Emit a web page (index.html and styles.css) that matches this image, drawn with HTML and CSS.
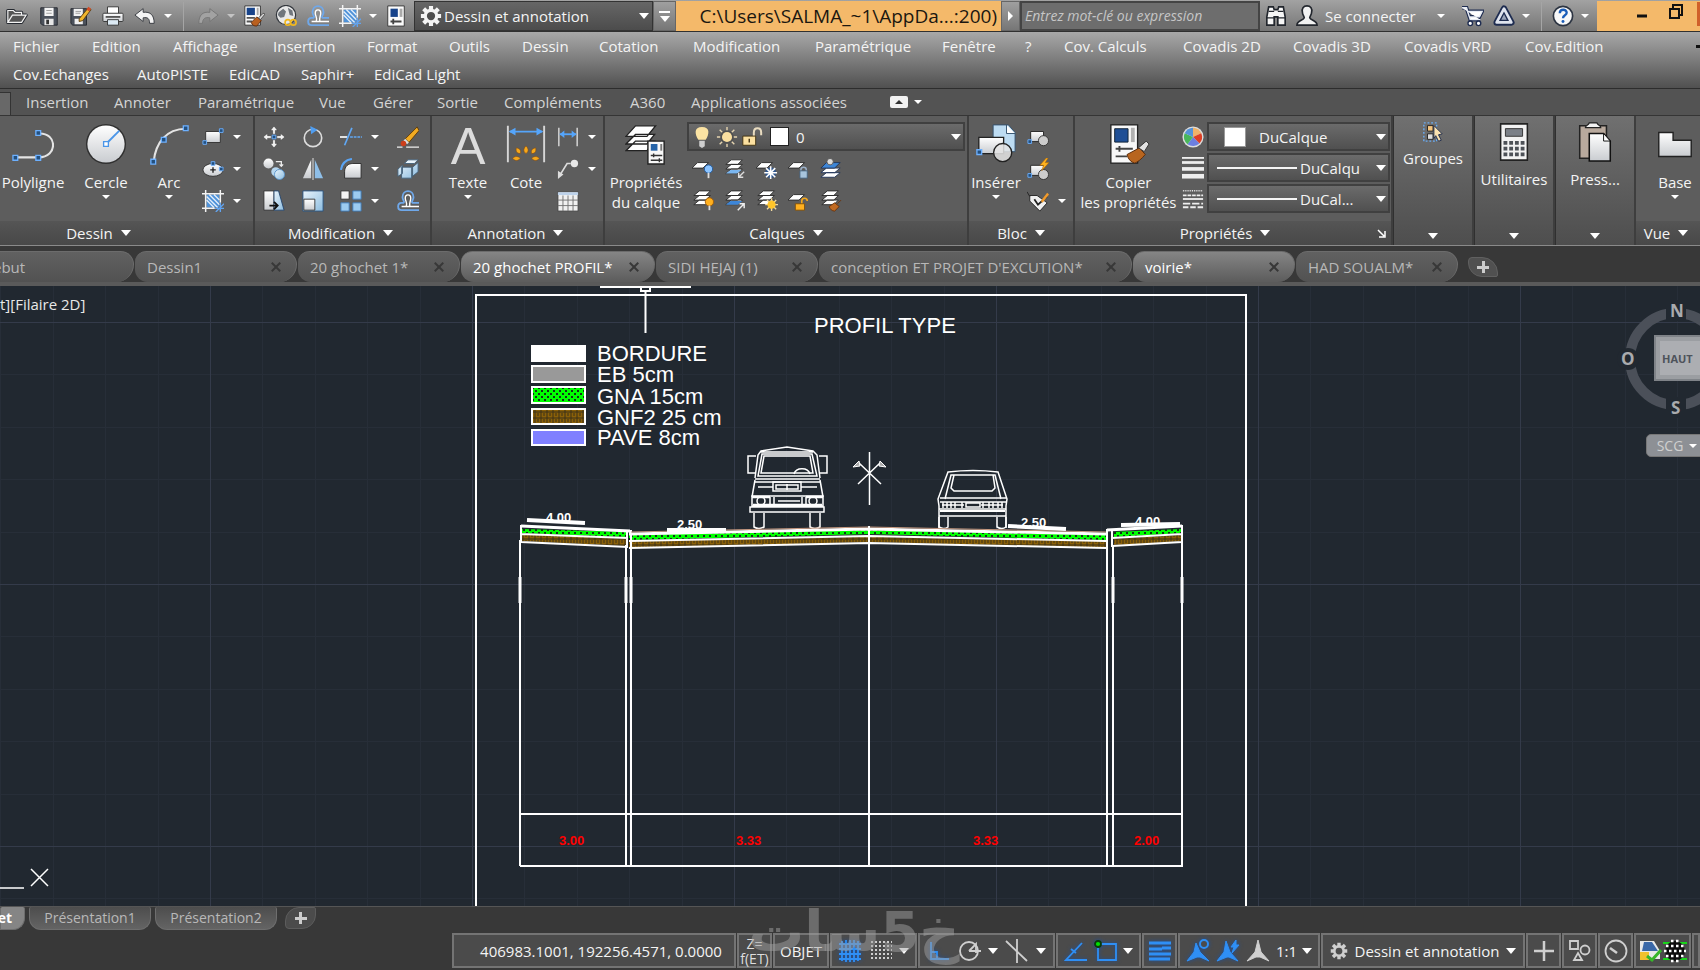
FILE: index.html
```
<!DOCTYPE html>
<html lang="fr">
<head>
    <meta charset="UTF-8">
    <meta name="viewport" content="width=device-width, initial-scale=1.0">
    <title>20 ghochet PROFIL</title>
    <link rel="stylesheet" href="styles.css">
</head>
<body>

    <!-- shared icons -->
    <svg class="defs" aria-hidden="true">
        <defs>
            <linearGradient id="gw" x1="0" y1="0" x2="0" y2="1"><stop offset="0" stop-color="#fff"/><stop offset="1" stop-color="#c9ccd0"/></linearGradient>
            <linearGradient id="gb" x1="0" y1="0" x2="1" y2="1"><stop offset="0" stop-color="#eaf4fb"/><stop offset="1" stop-color="#8dbde0"/></linearGradient>
            <pattern id="hatch-green" width="6" height="6" patternUnits="userSpaceOnUse"><rect width="6" height="6" fill="#00ff00"/><rect width="2" height="2" x="1" y="1" fill="#12301a"/><rect width="2" height="2" x="4" y="4" fill="#12301a"/></pattern>
            <pattern id="hatch-brown" width="6" height="6" patternUnits="userSpaceOnUse"><rect width="6" height="6" fill="#8a6008"/><path d="M1 0v6M4 0v3" stroke="#3a3018"/><path d="M0 5h6" stroke="#3a3018"/></pattern>
            <pattern id="grid" x="210" y="323" width="262" height="262" patternUnits="userSpaceOnUse">
                <path d="M52.5 0v262M105.5 0v262M157.5 0v262M210.5 0v262M0 52.5h262M0 105.5h262M0 157.5h262M0 210.5h262" stroke="#272e38"/>
                <path d="M0.5 0v262M0 0.5h262" stroke="#343b4a"/>
            </pattern>
        </defs>
        <symbol id="open" viewBox="0 0 24 24"><path d="M2 19V6h6l2 2h7v3M2 19l5-8h15l-5 8z" fill="#dcdcdc" stroke="#24282f" stroke-width="3.5" stroke-linejoin="round"/><path d="M2 19V6h6l2 2h7v3M2 19l5-8h15l-5 8z" fill="#555" stroke="#f3f3f3" stroke-width="1.3"/></symbol>
        <symbol id="save" viewBox="0 0 24 24"><path d="M3 3h18v19H5l-2-2z" fill="#4c525c" stroke="#25292f"/><path d="M7 3h10v9H7z" fill="#f4f4f4"/><path d="M9 6h6M9 9h6" stroke="#999"/><path d="M7 15h10v7H7z" fill="#e6e6e6"/><path d="M9 16h3v5H9z" fill="#333"/></symbol>
        <symbol id="saveas" viewBox="0 0 24 24"><path d="M1 4h17v18H3l-2-2z" fill="#4c525c" stroke="#25292f"/><path d="M4 4h10v8H4zM5 15h9v6H5z" fill="#f0f0f0"/><path d="M6 7h6M6 9h5" stroke="#999"/><path d="M10 15L20 3l3 2-9 12-4 1z" fill="#f1b62d" stroke="#5b3b10"/><path d="M18 5l2-3 3 2-2 3z" fill="#d54b28"/></symbol>
        <symbol id="print" viewBox="0 0 24 24"><path d="M6 2h12v8H6z" fill="#fff" stroke="#333"/><rect x="1" y="9" width="22" height="9" rx="1" fill="url(#gw)" stroke="#333"/><path d="M4 13h16" stroke="#555" stroke-width="2"/><path d="M6 16h12v6H6z" fill="#dceaf4" stroke="#333"/></symbol>
        <symbol id="undo" viewBox="0 0 24 24"><path d="M1 11l9-7v4c8-1 12 3 12 12h-5c0-5-2-7-7-6v4z" fill="#f4f4f4" stroke="#33373d" stroke-linejoin="round"/></symbol>
        <symbol id="redo" viewBox="0 0 24 24"><path d="M23 11l-9-7v4C6 7 2 11 2 20h4c0-5 3-7 8-6v4z" fill="#a2a2a2" stroke="#747474" stroke-linejoin="round"/></symbol>
        <symbol id="laybrush" viewBox="0 0 24 24"><path d="M2 1h17v21H2z" fill="#fbfbfb" stroke="#333"/><path d="M4 3h9v8H4z" fill="#17438a"/><path d="M15 3h2v8h-2z" fill="#aaa"/><path d="M4 14h9M4 18h6" stroke="#555" stroke-width="2"/><path d="M9 19l6-6 5 4-5 6c-3 0-5-1-6-4z" fill="#b9601f" stroke="#5d2a0b"/><path d="M17 14l5-5 2 1-5 6z" fill="#ddd" stroke="#444"/></symbol>
        <symbol id="globe" viewBox="0 0 24 24"><circle cx="12" cy="11" r="10.500" fill="#e8e8e8" stroke="#33373d" stroke-width="1.300"/><path d="M4 8l5-4 3 3-2 6-4 1-3-3zM14 3l5 3 1 6-4-1z" fill="#70767d"/><circle cx="14" cy="19" r="3" fill="none" stroke="#f2b81e" stroke-width="1.800"/><circle cx="20" cy="19" r="3" fill="none" stroke="#f2b81e" stroke-width="1.800"/></symbol>
        <symbol id="offset" viewBox="0 0 24 24"><path d="M24 22H5c-5 0-5-8 0-8h2c2-1-1-3-1-6C6-1 18-1 18 8c0 3-3 5-1 6h7" fill="none" stroke="#6fa8ea" stroke-width="2"/><path d="M24 18H5h5c2-3-1-6-1-9 0-5 6-5 6 0 0 3-2 5-1 9" fill="none" stroke="#fff" stroke-width="1.500"/></symbol>
        <symbol id="crop" viewBox="0 0 24 24"><path d="M5 5h14v14H5z" fill="#4f92d8"/><path d="M5 11l8 8M5 7l12 12M8 5l11 11M13 5l6 6" stroke="#e2eefb" stroke-width="1.500"/><path d="M0 4h24M0 20h14M4 0v24M20 0v14" stroke="#f3f3f3" stroke-width="1.600"/><path d="M14 20h10M20 14v10M15 24l9-9" stroke="#62a3ee" stroke-width="1.500"/></symbol>
        <symbol id="layout" viewBox="0 0 24 24"><path d="M3 1h18v22H3z" fill="#fbfbfb" stroke="#333"/><path d="M6 4h8v9H6z" fill="#17438a"/><path d="M16 4h3v9h-3z" fill="#aaa"/><path d="M6 18h12M9 15v6" stroke="#444" stroke-width="2"/></symbol>
        <symbol id="gear" viewBox="0 0 24 24"><path d="M12 1v22M1 12h22M4 4l16 16M20 4L4 20" stroke="currentColor" stroke-width="4.5"/><circle cx="12" cy="12" r="8" fill="currentColor"/><circle cx="12" cy="12" r="4.5" fill="#4d4d4d"/></symbol>
        <symbol id="bino" viewBox="0 0 24 24"><path d="M4 2h5l1 3h4l1-3h5l2 11v9h-8v-9h-4v9H2v-9z" fill="#f6f6f6" stroke="#22262d" stroke-width="1.8"/><path d="M2 14h8M14 14h8M4 7h6M14 7h6" stroke="#22262d" stroke-width="1.5"/></symbol>
        <symbol id="person" viewBox="0 0 24 24"><path d="M12 1c4 0 6 3 5 7 0 3-2 4-2 6 1 3 8 3 8 8H1c0-5 7-5 8-8 0-2-2-3-2-6-1-4 1-7 5-7z" fill="#f2f2f2" stroke="#22262d" stroke-width="1.8"/></symbol>
        <symbol id="cart" viewBox="0 0 24 24"><path d="M0 3h5l4 13h11M6 7h16l-3 6H8z" fill="#fff" stroke="#1e2c50" stroke-width="4"/><path d="M0 3h5l4 13h11M6 7h16l-3 6H8z" fill="#fff" stroke="#e8ecf4" stroke-width="1.500"/><circle cx="9" cy="20" r="2.500" fill="#fff" stroke="#1e2c50" stroke-width="1.500"/><circle cx="18" cy="20" r="2.500" fill="#fff" stroke="#1e2c50" stroke-width="1.500"/></symbol>
        <symbol id="a360" viewBox="0 0 24 24"><path d="M12 4l8 15H4z" fill="none" stroke="#1e2c50" stroke-width="7" stroke-linejoin="round"/><path d="M12 4l8 15H4z" fill="#1e2c50" stroke="#dfe4ee" stroke-width="3" stroke-linejoin="round"/><path d="M12 10l3 6H9z" fill="#9aa4b8"/></symbol>
        <symbol id="help" viewBox="0 0 24 24"><circle cx="12" cy="12" r="10.5" fill="#f8f8f8" stroke="#2c3442" stroke-width="1.8"/><path d="M8.500 9c0-5 7.500-5 7.500-.5 0 3-4 2.500-4 6" fill="none" stroke="#1b5db8" stroke-width="2.6"/><circle cx="12" cy="18" r="1.600" fill="#1b5db8"/></symbol>

        <symbol id="polyline" viewBox="0 0 44 40"><path d="M4 34h24M28 9c20-1 20 25 0 25" fill="none" stroke="#e4e4e4" stroke-width="2.2"/><path d="M1 32h5v5H1zM25 32h5v5h-5zM25 6h5v5h-5z" fill="#24507e" stroke="#6cb0ff" stroke-width="1.4"/></symbol>
        <symbol id="circle" viewBox="0 0 44 44"><circle cx="22" cy="22" r="21" fill="#303030"/><circle cx="22" cy="22" r="19.500" fill="url(#gw)"/><path d="M22 22L36 8" stroke="#4b96e8" stroke-width="2"/><path d="M19.500 19.500h5v5h-5z" fill="#fff" stroke="#4b96e8" stroke-width="1.4"/></symbol>
        <symbol id="arc" viewBox="0 0 44 44"><path d="M6 40C8 22 18 6 40 6" fill="none" stroke="#e4e4e4" stroke-width="2.2"/><path d="M3 38h5v5H3zM14 15h5v5h-5zM37 3h5v5h-5z" fill="#24507e" stroke="#6cb0ff" stroke-width="1.4"/></symbol>
        <symbol id="rect" viewBox="0 0 24 24"><path d="M4 6h16v12H4z" fill="url(#gw)" stroke="#303030"/><path d="M1 16h4v4H1zM19 3h4v4h-4z" fill="#24507e" stroke="#6cb0ff"/></symbol>
        <symbol id="ellipse" viewBox="0 0 24 24"><ellipse cx="12" cy="13" rx="11" ry="7" fill="url(#gw)" stroke="#303030"/><path d="M9 13h6M12 10v6" stroke="#222" stroke-width="1.5"/><path d="M10 4h4v4h-4zM19 10h4v4h-4z" fill="#24507e" stroke="#6cb0ff"/></symbol>
        <symbol id="move" viewBox="0 0 24 24"><path d="M12 0l4 5h-2.500v4h-3V5H8zM12 24l4-5h-2.500v-4h-3v4H8zM0 12l5-4v2.500h4v3H5V16zM24 12l-5-4v2.500h-4v3h4V16z" fill="#f1f1f1" stroke="#333" stroke-width=".6"/><path d="M10 10h4v4h-4z" fill="#24507e" stroke="#6cb0ff"/></symbol>
        <symbol id="rotate" viewBox="0 0 24 24"><circle cx="12" cy="13" r="9.500" fill="none" stroke="#ddd" stroke-width="1.800"/><path d="M9 0l8 4-7 5z" fill="#4f9df0"/></symbol>
        <symbol id="trim" viewBox="0 0 24 24"><path d="M0 12h8" stroke="#eee" stroke-width="2"/><path d="M11 12h13" stroke="#60a8f5" stroke-width="1.600" stroke-dasharray="3 1"/><path d="M5 21l8-19" stroke="#60a8f5" stroke-width="1.800"/></symbol>
        <symbol id="erase" viewBox="0 0 24 24"><path d="M0 23h6M10 23h14" stroke="#eee" stroke-width="1.500"/><path d="M9 14L22 1l2 4-11 13z" fill="#f2ab22" stroke="#5d3b0b"/><path d="M9 14l4 4-2 2-4-4z" fill="#ddd"/><circle cx="7" cy="19" r="3" fill="#cc3f1b"/></symbol>
        <symbol id="copy" viewBox="0 0 24 24"><circle cx="6" cy="6" r="5.500" fill="url(#gw)"/><path d="M14 4h6v4m-2-1l2 2 2-2" fill="none" stroke="#eee" stroke-width="1.400"/><circle cx="14" cy="15" r="5" fill="#b6d6ef"/><circle cx="18" cy="18" r="5.500" fill="url(#gb)" stroke="#5a93c8"/></symbol>
        <symbol id="mirror" viewBox="0 0 24 24"><path d="M10 2v20H1z" fill="url(#gw)"/><path d="M14 2v20h9z" fill="#8fbfe8"/><path d="M12 0v24" stroke="#eee"/></symbol>
        <symbol id="fillet" viewBox="0 0 24 24"><path d="M5 22v-7c0-6 4-9 9-9h9v16z" fill="url(#gw)" stroke="#2c2c2c"/><path d="M1 13C2 6 6 2 13 1" fill="none" stroke="#5aa4f4" stroke-width="2.200"/></symbol>
        <symbol id="explode" viewBox="0 0 24 24"><path d="M8 6l4-4h11l-4 4z" fill="#eaf4fb" stroke="#44617a"/><path d="M1 12l5-4v9l-5 3zM5 10h11v12H5zM17 10l6-5v10l-6 5z" fill="url(#gb)" stroke="#44617a"/></symbol>
        <symbol id="stretch" viewBox="0 0 24 24"><path d="M1 1h11v21H1z" fill="url(#gw)" stroke="#333"/><path d="M12 1h5l6 21H12z" fill="url(#gb)" stroke="#26466d"/><path d="M7 17h9m-4-4l4 4-4 4" fill="none" stroke="#111" stroke-width="2"/></symbol>
        <symbol id="scale" viewBox="0 0 24 24"><path d="M1 1h22v22H1z" fill="url(#gb)" stroke="#29517e"/><path d="M2 10h12v12H2z" fill="url(#gw)" stroke="#333"/></symbol>
        <symbol id="array" viewBox="0 0 24 24"><path d="M1 1h9v9H1z" fill="#f2f2f2" stroke="#333"/><path d="M14 1h9v9h-9zM1 14h9v9H1zM14 14h9v9h-9z" fill="#9ccbf0" stroke="#3f7cb8"/></symbol>

        <symbol id="dim" viewBox="0 0 44 44"><path d="M3 3v38M41 3v38" stroke="#d6d6d6" stroke-width="2"/><path d="M5 9h34" stroke="#55a5fb" stroke-width="2"/><path d="M4 9l7-4v8zM40 9l-7-4v8z" fill="#55a5fb"/><g fill="#f5a81c" stroke="#8a4a0a" stroke-width=".6"><path d="M22 24c3 3 3 6 0 8-3-2-3-5 0-8zM12 26c4 1 5 3 4 6-4 0-5-3-4-6zM32 26c-4 1-5 3-4 6 4 0 5-3 4-6zM8 37c3-3 6-2 8 0-2 3-6 3-8 0zM36 37c-3-3-6-2-8 0 2 3 6 3 8 0z"/></g></symbol>
        <symbol id="lindim" viewBox="0 0 24 24"><path d="M2 2v20M22 2v20" stroke="#d6d6d6" stroke-width="1.600"/><path d="M3 9h18" stroke="#55a5fb" stroke-width="2"/><path d="M3 9l5-4v8zM21 9l-5-4v8z" fill="#55a5fb"/></symbol>
        <symbol id="leader" viewBox="0 0 24 24"><circle cx="19" cy="6" r="4" fill="#e8e8e8"/><path d="M15 6h-4L3 19" fill="none" stroke="#ddd" stroke-width="1.800"/><path d="M1 23v-9l6 4z" fill="#ddd"/></symbol>
        <symbol id="table" viewBox="0 0 24 24"><path d="M1 2h22v21H1z" fill="#f0f0f0" stroke="#444"/><path d="M1 4h22" stroke="#bdd2ea" stroke-width="3"/><path d="M1 11h22M1 17h22M6.500 6v17M12 6v17M17.500 6v17" stroke="#707070"/></symbol>

        <symbol id="sheets" viewBox="0 0 24 24"><g fill="#fff" stroke="#2b2b2b"><path d="M2 19l6-5h12l-5 5zM2 14l6-5h12l-5 5zM2 9l6-5h12l-5 5z"/></g></symbol>
        <symbol id="sheet" viewBox="0 0 24 24"><path d="M0 11l6-6h12l-6 6z" fill="#fff" stroke="#2b2b2b"/></symbol>
        <symbol id="layers" viewBox="0 0 44 44"><g fill="#fff" stroke="#222" stroke-width="1.400"><path d="M1 29l10-10h20L23 29zM1 22L11 12h20l-8 10zM1 14L11 3h21l-9 11z"/></g><path d="M24 19h17v24H24z" fill="#f8f8f8" stroke="#222" stroke-width="1.500"/><path d="M27 22h7v7h-7z" fill="#2563a8"/><path d="M37 22h2v7h-2z" fill="#777"/><path d="M27 34h12M27 39h12M30 32v4M36 37v4" stroke="#333" stroke-width="1.500"/></symbol>
        <symbol id="l1" viewBox="0 0 24 24"><use href="#sheet"/><circle cx="18" cy="12" r="4.500" fill="#8cc4ff" stroke="#1f5aa0"/><path d="M18 16v6" stroke="#ddd" stroke-width="2"/></symbol>
        <symbol id="l2" viewBox="0 0 24 24"><use href="#sheets" y="-2"/><path d="M2 17l5-4h12l-5 4z" fill="#7ab6f0"/><path d="M22 15l-6 6m0-5v5h5" fill="none" stroke="#ddd" stroke-width="1.500"/></symbol>
        <symbol id="l3" viewBox="0 0 24 24"><use href="#sheet"/><circle cx="16" cy="16" r="6" fill="#31578d"/><path d="M16 9v14M9 16h14M11 11l10 10M21 11L11 21" stroke="#fff" stroke-width="1.700"/></symbol>
        <symbol id="l4" viewBox="0 0 24 24"><use href="#sheet"/><path d="M14 15v-2c0-4 6-4 6 0v2" fill="none" stroke="#9bb0c7" stroke-width="1.600"/><path d="M13 14h8v8h-8z" fill="#a7c4dd" stroke="#45617c"/></symbol>
        <symbol id="l5" viewBox="0 0 24 24"><g fill="#fff" stroke="#22365a"><path d="M1 21l6-5h15l-6 5zM1 16l6-5h15l-6 5z"/></g><path d="M1 11l6-6h15l-6 6z" fill="#3d86d8" stroke="#22365a"/><circle cx="11" cy="4" r="3.500" fill="#ddd" stroke="#555"/></symbol>
        <symbol id="l6" viewBox="0 0 24 24"><use href="#sheets" y="-3"/><circle cx="19" cy="13" r="4.500" fill="#ffb01f" stroke="#a35d08"/><path d="M19 17v5" stroke="#ddd" stroke-width="2"/></symbol>
        <symbol id="l7" viewBox="0 0 24 24"><use href="#sheets" y="-3"/><path d="M2 16l5-4h13l-5 4z" fill="#3d86d8"/><path d="M15 22l7-7m-5 0h5v5" fill="none" stroke="#eee" stroke-width="1.600"/></symbol>
        <symbol id="l8" viewBox="0 0 24 24"><use href="#sheets" y="-3"/><path d="M17 9v14M10 16h14M12 11l10 10M22 11L12 21" stroke="#f1d9a0" stroke-width="1.500"/><circle cx="17" cy="16" r="4.500" fill="#ffc52b"/></symbol>
        <symbol id="l9" viewBox="0 0 24 24"><use href="#sheet"/><path d="M15 15v-3c0-4 6-4 6 0" fill="none" stroke="#f5a81c" stroke-width="1.800"/><path d="M8 15h10v7H8z" fill="#ffb01f" stroke="#80500b"/></symbol>
        <symbol id="l10" viewBox="0 0 24 24"><use href="#sheets" y="-3"/><path d="M10 18l6-4 5 4-5 5c-3 0-5-2-6-5zM19 15l4-4" fill="#c06a22" stroke="#6a320b"/></symbol>
        <symbol id="bulb" viewBox="0 0 24 24"><path d="M12 1c9 0 8 8 4 14H8C4 9 3 1 12 1z" fill="#fbe3a3"/><path d="M9 16h6v6l-3 2-3-2z" fill="#cfcfcf"/></symbol>
        <symbol id="sun" viewBox="0 0 24 24"><path d="M12 1v22M1 12h22M4 4l16 16M20 4L4 20" stroke="#e6d5b0" stroke-width="1.500"/><circle cx="12" cy="12" r="7.500" fill="#505050"/><circle cx="12" cy="12" r="5.500" fill="#fbe0a0"/></symbol>
        <symbol id="unlock" viewBox="0 0 24 24"><path d="M14 12V7c0-6 8-6 8 0v3" fill="none" stroke="#e9dcc0" stroke-width="2.200"/><path d="M2 11h14v10H2z" fill="#fbe0a0" stroke="#403010"/><path d="M9 14v4" stroke="#403010" stroke-width="1.500"/></symbol>

        <symbol id="insert" viewBox="0 0 44 44"><path d="M19 2h16l7 8v20H19z" fill="#bddcf2" stroke="#34526e"/><path d="M33 2v9h9" fill="#fff" stroke="#34526e"/><path d="M4 15h26v17H4z" fill="url(#gw)" stroke="#222" stroke-width="1.400"/><circle cx="29" cy="31" r="9.500" fill="#e5e5e5" fill-opacity=".85" stroke="#222" stroke-width="1.400"/><path d="M2 28h5v5H2z" fill="#24507e" stroke="#6cb0ff" stroke-width="1.400"/></symbol>
        <symbol id="block" viewBox="0 0 24 24"><path d="M4 6h14v11H4z" fill="url(#gw)" stroke="#222"/><circle cx="18" cy="16" r="5.500" fill="#ccc" stroke="#333"/><path d="M1 15h4v4H1z" fill="#24507e" stroke="#6cb0ff"/></symbol>
        <symbol id="blockedit" viewBox="0 0 24 24"><use href="#block" y="2"/><path d="M21 0l-7 8h4l-2 6 8-9h-4l3-5z" fill="#ffb31f" stroke="#a96208" stroke-width=".6"/></symbol>
        <symbol id="attr" viewBox="0 0 24 24"><path d="M3 6h8l11 8-8 9L3 12z" fill="#f0f0f0" stroke="#222"/><path d="M8 10l4 6 10-9" fill="none" stroke="#222" stroke-width="2"/><path d="M15 12l7-9 2 2-7 9z" fill="#f09a2c"/><path d="M0 2l3 5" stroke="#222"/></symbol>
        <symbol id="match" viewBox="0 0 44 44"><path d="M3 2h28v40H3z" fill="#f8f8f8" stroke="#222" stroke-width="1.400"/><path d="M7 6h14v14H7z" fill="#1f4f96" stroke="#123"/><path d="M24 5h4v15h-4z" fill="#b0b0b0"/><path d="M8 27h18M8 35h12M12 24v6" stroke="#444" stroke-width="2"/><path d="M20 33l13-7 6 7c-4 5-8 8-11 9-4-1-7-4-8-9z" fill="#b8651f" stroke="#5b2c0b"/><path d="M32 26l8-7 3 3-5 8z" fill="#e2e2e2" stroke="#333"/></symbol>
        <symbol id="wheel" viewBox="0 0 24 24"><circle cx="12" cy="12" r="11.500" fill="#ddd"/><path d="M12 12V2a10 10 0 0 1 9 6z" fill="#f0b268"/><path d="M12 12l9-4a10 10 0 0 1-2 11z" fill="#dd3f25"/><path d="M12 12l7 7a10 10 0 0 1-13 1z" fill="#6c7fe0"/><path d="M12 12l-6 8A10 10 0 0 1 3 8z" fill="#49b65b"/><path d="M12 12L3 8a10 10 0 0 1 9-6z" fill="#5593d8"/></symbol>
        <symbol id="weights" viewBox="0 0 24 24"><path d="M0 1h24" stroke="#eee" stroke-width="2"/><path d="M0 6h24" stroke="#eee" stroke-width="3"/><path d="M0 13h24" stroke="#eee" stroke-width="4"/><path d="M0 21h24" stroke="#eee" stroke-width="5"/></symbol>
        <symbol id="types" viewBox="0 0 24 24"><path d="M1 3h22" stroke="#eee" stroke-width="1.500" stroke-dasharray="1 1"/><path d="M1 8h22" stroke="#eee" stroke-width="2" stroke-dasharray="4 1"/><path d="M1 12h22" stroke="#eee" stroke-width="2"/><path d="M1 17h22" stroke="#eee" stroke-width="2" stroke-dasharray="8 2"/><path d="M1 21h22" stroke="#eee" stroke-width="2" stroke-dasharray="6 2"/></symbol>
        <symbol id="group" viewBox="0 0 24 24"><path d="M2 2h14v20H2z" fill="none" stroke="#69acf5" stroke-width="1.500" stroke-dasharray="2 2"/><path d="M6 5h6v6H6z" fill="#f6c680" stroke="#222"/><path d="M6 14h6v6H6z" fill="#ddd" stroke="#222"/><path d="M13 5l9 9-4 1 3 6-3 1-3-6-2 3z" fill="#fbe2b0" stroke="#1d2a4a"/></symbol>
        <symbol id="calc" viewBox="0 0 44 44"><path d="M8 3h28v38H8z" fill="#f2f2f2" stroke="#222" stroke-width="1.600"/><path d="M13 8h18v8H13z" fill="#7b8087" stroke="#333"/><path d="M11 23h22M11 29h22M11 35h22" stroke="#4d5157" stroke-width="4" stroke-dasharray="4 2"/></symbol>
        <symbol id="paste" viewBox="0 0 44 44"><path d="M6 5h28v34H6z" fill="#b8a99d" stroke="#222" stroke-width="1.600"/><path d="M12 7c0-3 3-2 4-5h8c1 3 4 2 4 5z" fill="#f2f2f2" stroke="#222" stroke-width="1.400"/><path d="M16 13h15l7 8v21H16z" fill="url(#gw)" stroke="#111" stroke-width="1.600"/><path d="M31 13v8h7z" fill="#fff" stroke="#111"/></symbol>
        <symbol id="base" viewBox="0 0 44 44"><path d="M5 10h15v8h19v17H5z" fill="url(#gw)" stroke="#222" stroke-width="1.500"/></symbol>
    </svg>

    <header class="titlebar">
        <div class="quick">
            <button class="qb" aria-label="Ouvrir"><svg class="ic"><use href="#open"/></svg></button>
            <button class="qb" aria-label="Enregistrer"><svg class="ic"><use href="#save"/></svg></button>
            <button class="qb" aria-label="Enregistrer sous"><svg class="ic"><use href="#saveas"/></svg></button>
            <button class="qb" aria-label="Imprimer"><svg class="ic"><use href="#print"/></svg></button>
            <button class="qb" aria-label="Annuler"><svg class="ic"><use href="#undo"/></svg></button>
            <button class="cb" aria-label="Liste annuler"><i class="caret small"></i></button>
            <span class="sep"></span>
            <button class="qb" aria-label="Rétablir"><svg class="ic"><use href="#redo"/></svg></button>
            <button class="cb" aria-label="Liste rétablir"><i class="caret small dim"></i></button>
            <button class="qb" aria-label="Copier calque"><svg class="ic"><use href="#laybrush"/></svg></button>
            <button class="qb" aria-label="Géolocalisation"><svg class="ic"><use href="#globe"/></svg></button>
            <button class="qb" aria-label="Décaler"><svg class="ic"><use href="#offset"/></svg></button>
            <button class="qb" aria-label="Hachures"><svg class="ic"><use href="#crop"/></svg></button>
            <button class="cb" aria-label="Liste hachures"><i class="caret small"></i></button>
            <button class="qb" aria-label="Propriétés"><svg class="ic"><use href="#layout"/></svg></button>
        </div>
        <div class="workspace">
            <svg class="ic"><use href="#gear"/></svg>
            <select aria-label="Espace de travail"><option>Dessin et annotation</option></select>
            <i class="caret"></i>
        </div>
        <button class="more" aria-label="Personnaliser"><i class="bar"></i><i class="caret"></i></button>
        <div class="file-title">C:\Users\SALMA_~1\AppDa...:200)</div>
        <button class="play" aria-label="Développer"><i></i></button>
        <input class="search" type="text" aria-label="Recherche" placeholder="Entrez mot-clé ou expression">
        <div class="account">
            <button class="qb" aria-label="Rechercher"><svg class="ic"><use href="#bino"/></svg></button>
            <button class="signin"><svg class="ic"><use href="#person"/></svg><span>Se connecter</span><i class="caret small"></i></button>
            <button class="qb" aria-label="Boutique"><svg class="ic"><use href="#cart"/></svg></button>
            <button class="qb" aria-label="A360"><svg class="ic"><use href="#a360"/></svg></button>
            <button class="cb" aria-label="Liste A360"><i class="caret small"></i></button>
            <span class="sep"></span>
            <button class="qb" aria-label="Aide"><svg class="ic"><use href="#help"/></svg></button>
            <button class="cb" aria-label="Liste aide"><i class="caret small"></i></button>
        </div>
        <div class="window-buttons">
            <button aria-label="Réduire"><svg width="16" height="20"><path d="M3 14h10" stroke="#111" stroke-width="3"/></svg></button>
            <button aria-label="Restaurer"><svg width="16" height="20"><path d="M2 7h9v9H2zM5 6V3h9v10h-3" fill="none" stroke="#111" stroke-width="2"/></svg></button>
            <button class="close" aria-label="Fermer"></button>
        </div>
    </header>

    <nav class="menubar">
        <div class="menu-row">
            <a href="#">Fichier</a><a href="#">Edition</a><a href="#">Affichage</a><a href="#">Insertion</a><a href="#">Format</a><a href="#">Outils</a><a href="#">Dessin</a><a href="#">Cotation</a><a href="#">Modification</a><a href="#">Paramétrique</a><a href="#">Fenêtre</a><a href="#">?</a><a href="#">Cov. Calculs</a><a href="#">Covadis 2D</a><a href="#">Covadis 3D</a><a href="#">Covadis VRD</a><a href="#">Cov.Edition</a>
            <i class="dash"></i>
        </div>
        <div class="menu-row second">
            <a href="#">Cov.Echanges</a><a href="#">AutoPISTE</a><a href="#">EdiCAD</a><a href="#">Saphir+</a><a href="#">EdiCad Light</a>
        </div>
    </nav>

    <nav class="ribbon-tabs">
        <span class="current-tab"></span>
        <a href="#">Insertion</a><a href="#">Annoter</a><a href="#">Paramétrique</a><a href="#">Vue</a><a href="#">Gérer</a><a href="#">Sortie</a><a href="#">Compléments</a><a href="#">A360</a><a href="#">Applications associées</a>
        <button class="minimize" aria-label="Réduire le ruban"><svg width="18" height="12"><rect width="18" height="12" rx="2" fill="#f2f2f2"/><path d="M5 8l4-4 4 4z" fill="#333"/></svg><i class="caret small"></i></button>
    </nav>

    <section class="ribbon">
        <div class="panel dessin">
            <div class="body">
                <button class="big"><svg><use href="#polyline"/></svg><span>Polyligne</span></button>
                <button class="big"><svg><use href="#circle"/></svg><span>Cercle</span><i class="caret small"></i></button>
                <button class="big"><svg><use href="#arc"/></svg><span>Arc</span><i class="caret small"></i></button>
                <div class="tools">
                    <button class="tool wide" aria-label="Rectangle"><svg class="ic"><use href="#rect"/></svg><i class="caret small"></i></button>
                    <button class="tool wide" aria-label="Ellipse"><svg class="ic"><use href="#ellipse"/></svg><i class="caret small"></i></button>
                    <button class="tool wide" aria-label="Hachures"><svg class="ic"><use href="#crop"/></svg><i class="caret small"></i></button>
                </div>
            </div>
            <button class="panel-title">Dessin<i class="caret"></i></button>
        </div>
        <div class="panel modification">
            <div class="body">
                <div class="tools mod">
                    <button class="tool" aria-label="Déplacer"><svg class="ic"><use href="#move"/></svg></button>
                    <button class="tool" aria-label="Rotation"><svg class="ic"><use href="#rotate"/></svg></button>
                    <button class="tool wide" aria-label="Ajuster"><svg class="ic"><use href="#trim"/></svg><i class="caret small"></i></button>
                    <button class="tool" aria-label="Effacer"><svg class="ic"><use href="#erase"/></svg></button>
                    <button class="tool" aria-label="Copier"><svg class="ic"><use href="#copy"/></svg></button>
                    <button class="tool" aria-label="Miroir"><svg class="ic"><use href="#mirror"/></svg></button>
                    <button class="tool wide" aria-label="Raccord"><svg class="ic"><use href="#fillet"/></svg><i class="caret small"></i></button>
                    <button class="tool" aria-label="Décomposer"><svg class="ic"><use href="#explode"/></svg></button>
                    <button class="tool" aria-label="Etirer"><svg class="ic"><use href="#stretch"/></svg></button>
                    <button class="tool" aria-label="Echelle"><svg class="ic"><use href="#scale"/></svg></button>
                    <button class="tool wide" aria-label="Réseau"><svg class="ic"><use href="#array"/></svg><i class="caret small"></i></button>
                    <button class="tool" aria-label="Décaler"><svg class="ic"><use href="#offset"/></svg></button>
                </div>
            </div>
            <button class="panel-title">Modification<i class="caret"></i></button>
        </div>
        <div class="panel annotation">
            <div class="body">
                <button class="big"><b class="letter">A</b><span>Texte</span><i class="caret small"></i></button>
                <button class="big"><svg><use href="#dim"/></svg><span>Cote</span></button>
                <div class="tools">
                    <button class="tool wide" aria-label="Cote linéaire"><svg class="ic"><use href="#lindim"/></svg><i class="caret small"></i></button>
                    <button class="tool wide" aria-label="Repère"><svg class="ic"><use href="#leader"/></svg><i class="caret small"></i></button>
                    <button class="tool wide" aria-label="Tableau"><svg class="ic"><use href="#table"/></svg></button>
                </div>
            </div>
            <button class="panel-title">Annotation<i class="caret"></i></button>
        </div>
        <div class="panel calques">
            <div class="body">
                <button class="big"><svg><use href="#layers"/></svg><span>Propriétés<br>du calque</span></button>
                <div class="layer-tools">
                    <div class="combo">
                        <svg class="ic"><use href="#bulb"/></svg>
                        <svg class="ic"><use href="#sun"/></svg>
                        <svg class="ic"><use href="#unlock"/></svg>
                        <span class="swatch"></span>
                        <select aria-label="Calque"><option>0</option></select>
                        <i class="caret"></i>
                    </div>
                    <div class="tools lay">
                        <button class="tool" aria-label="Désactiver"><svg class="ic"><use href="#l1"/></svg></button>
                        <button class="tool" aria-label="Isoler"><svg class="ic"><use href="#l2"/></svg></button>
                        <button class="tool" aria-label="Geler"><svg class="ic"><use href="#l3"/></svg></button>
                        <button class="tool" aria-label="Verrouiller"><svg class="ic"><use href="#l4"/></svg></button>
                        <button class="tool" aria-label="Rendre courant"><svg class="ic"><use href="#l5"/></svg></button>
                        <button class="tool" aria-label="Activer tout"><svg class="ic"><use href="#l6"/></svg></button>
                        <button class="tool" aria-label="Ne plus isoler"><svg class="ic"><use href="#l7"/></svg></button>
                        <button class="tool" aria-label="Libérer tout"><svg class="ic"><use href="#l8"/></svg></button>
                        <button class="tool" aria-label="Déverrouiller"><svg class="ic"><use href="#l9"/></svg></button>
                        <button class="tool" aria-label="Copier calque"><svg class="ic"><use href="#l10"/></svg></button>
                    </div>
                </div>
            </div>
            <button class="panel-title">Calques<i class="caret"></i></button>
        </div>
        <div class="panel bloc">
            <div class="body">
                <button class="big"><svg><use href="#insert"/></svg><span>Insérer</span><i class="caret small"></i></button>
                <div class="tools">
                    <button class="tool wide" aria-label="Créer"><svg class="ic"><use href="#block"/></svg></button>
                    <button class="tool wide" aria-label="Editer"><svg class="ic"><use href="#blockedit"/></svg></button>
                    <button class="tool wide" aria-label="Attributs"><svg class="ic"><use href="#attr"/></svg><i class="caret small"></i></button>
                </div>
            </div>
            <button class="panel-title">Bloc<i class="caret"></i></button>
        </div>
        <div class="panel proprietes">
            <div class="body">
                <button class="big"><svg><use href="#match"/></svg><span>Copier<br>les propriétés</span></button>
                <div class="prop-list">
                    <svg class="ic"><use href="#wheel"/></svg>
                    <div class="combo"><span class="swatch color"></span><select aria-label="Couleur"><option>DuCalque</option></select><i class="caret"></i></div>
                    <svg class="ic"><use href="#weights"/></svg>
                    <div class="combo"><span class="line"></span><select aria-label="Epaisseur"><option>DuCalqu</option></select><i class="caret"></i></div>
                    <svg class="ic"><use href="#types"/></svg>
                    <div class="combo"><span class="line"></span><select aria-label="Type de ligne"><option>DuCal...</option></select><i class="caret"></i></div>
                </div>
            </div>
            <button class="panel-title">Propriétés<i class="caret"></i><svg class="launcher" width="10" height="10"><path d="M1 1l6 6M8 2v6H2" fill="none" stroke="#fff" stroke-width="1.500"/></svg></button>
        </div>
        <button class="panel collapsed"><svg class="ic"><use href="#group"/></svg><span>Groupes</span><i class="caret"></i></button>
        <button class="panel collapsed"><svg><use href="#calc"/></svg><span>Utilitaires</span><i class="caret"></i></button>
        <button class="panel collapsed"><svg><use href="#paste"/></svg><span>Press...</span><i class="caret"></i></button>
        <div class="panel vue">
            <div class="body">
                <button class="big"><svg><use href="#base"/></svg><span>Base</span><i class="caret small"></i></button>
            </div>
            <button class="panel-title">Vue<i class="caret"></i></button>
        </div>
    </section>

    <nav class="doc-tabs">
        <a href="#" class="doc start">ébut</a>
        <a href="#" class="doc">Dessin1<i class="x"></i></a>
        <a href="#" class="doc">20 ghochet 1*<i class="x"></i></a>
        <a href="#" class="doc active medium">20 ghochet PROFIL*<i class="x"></i></a>
        <a href="#" class="doc">SIDI HEJAJ (1)<i class="x"></i></a>
        <a href="#" class="doc long">conception ET PROJET D'EXCUTION*<i class="x"></i></a>
        <a href="#" class="doc active">voirie*<i class="x"></i></a>
        <a href="#" class="doc">HAD SOUALM*<i class="x"></i></a>
        <button class="add" aria-label="Nouveau dessin"><i class="plus"></i></button>
    </nav>

    <main class="canvas">
        <svg class="drawing">
            <g transform="translate(0 -287)">
                <rect y="287" width="100%" height="100%" fill="url(#grid)"/>
                <text class="view-label" x="0" y="311">t][Filaire 2D]</text>

                <!-- frame and crosshair -->
                <path class="ln2" d="M476 1000V296H1246V1000"/>
                <path class="ln2" d="M600 288H691M645.500 292V334M641 288v4h9v-4"/>
                <text class="cad" x="814" y="334">PROFIL TYPE</text>

                <!-- legend -->
                <rect class="key" x="532" y="347" width="53" height="15" fill="#fff"/>
                <rect class="key" x="532" y="367" width="53" height="16" fill="#999"/>
                <rect class="key" x="532" y="388" width="53" height="16" fill="url(#hatch-green)"/>
                <rect class="key" x="532" y="410" width="53" height="15" fill="url(#hatch-brown)"/>
                <rect class="key" x="532" y="431" width="53" height="15" fill="#8080ff"/>
                <text class="cad" x="597" y="362">BORDURE</text>
                <text class="cad" x="597" y="383">EB 5cm</text>
                <text class="cad" x="597" y="405">GNA 15cm</text>
                <text class="cad" x="597" y="426">GNF2 25 cm</text>
                <text class="cad" x="597" y="446">PAVE 8cm</text>

                <!-- truck -->
                <g transform="translate(0 1)">
                    <g class="ln">
                        <path d="M755 478l3-23 3-4 26-4 26 4 4 4 3 23M760 452h53M758 476l4-22h50l5 22zM761 473l3-17h46l3 17z"/>
                        <path d="M756 456h-8v17h7M819 456h8v17h-7M794 474c2-7 14-7 16 0M755 479h65M754 482h67M755 480l-3 17M820 480l3 17"/>
                        <path d="M773 482h28v9h-28zM776 485h22v4h-22zM758 487h15M801 487h16M787 484v6M752 496h71v10h-71zM750 507h74v5h-74z"/>
                        <path d="M770 497v8M774 497v8M778 501h22M802 497v8M806 497v8M754 513v14q5 3 10 0v-14M810 513v14q5 3 10 0v-14"/>
                        <circle cx="761" cy="501" r="4"/><circle cx="813" cy="501" r="4"/>
                    </g>
                    <path d="M752 497h18M806 497h17M753 505h69" stroke="#fff" stroke-width="2.500"/>
                </g>

                <!-- traffic sign -->
                <path class="ln" d="M869.500 453V506M858 485l22-21M881 485l-22-21"/>
                <path d="M880 462l6 6-7-1zM859 462l-6 6 7-1z" fill="#aaa" stroke="#fff"/>

                <!-- car -->
                <g transform="translate(0 1)">
                    <g class="ln">
                        <path d="M939 528v-22l-1-7 10-27q25-3 50 0l9 27-1 7v22M945 499l6-24h44l6 24M954 475l-3 13 3 3h38l3-3-2-13zM940 498h66M940 502h66M939 509h67M939 516h67"/>
                        <path d="M942 505h22M981 505h22M943 502v6M947 502v6M951 502v6M955 502v6M962 502v6M983 502v6M989 502v6M993 502v6M998 502v6M1002 502v6M966 503h14v4h-14zM939 517v10q5 3 9 0v-10M997 517v10q5 3 9 0v-10"/>
                    </g>
                    <path d="M940 511h65" stroke="#fff" stroke-width="2"/>
                </g>

                <!-- road layers -->
                <g transform="translate(0 1)">
                    <path d="M521 529L628 532v5L521 533zM629 535L869 530l237 5v5l-237-6-240 6zM1114 532l68-3v4l-68 4z" fill="url(#hatch-green)"/>
                    <path d="M521 534l107 5v7L521 541zM629 541l240-4 237 4v7l-237-6-240 6zM1114 539l68-4v6l-68 5z" fill="url(#hatch-brown)"/>
                    <path class="ln3" d="M521 526l109 5M629 534l240-5 237 5M1107 530l75-4"/>
                    <path class="ln2" d="M521 534l107 4M521 542l107 5M521 525v18M627 530v17M631 530v18M629 541l240-5 237 5M629 548l240-5 237 5M1107 529v19M1112 529v18M1112 538l70-4M1112 546l70-4M1182 525v18"/>
                    <path d="M631 532l238-5 237 5" fill="none" stroke="#c89b82"/>
                </g>
                <g stroke="#fff" stroke-width="4"><path d="M527 521l58 3M667 531h59M1008 527l58 3M1121 526l59-1"/></g>
                <text class="dim" x="546" y="523">4.00</text>
                <text class="dim" x="677" y="530">2.50</text>
                <text class="dim" x="1021" y="528">2.50</text>
                <text class="dim" x="1135" y="527">4.00</text>

                <!-- cross-section table -->
                <path class="ln2" d="M869 527V866M520 815H1183M520 867H1183"/>
                <path class="ln2" d="M520 541V867M626 546V867M631 546V867M869 546V867M1107 547V867M1113 547V867M1182 541V867"/>
                <path class="ln3" d="M520 578v26M626 578v26M631 578v26M1113 578v26M1182 578v26"/>
                <text class="dim red" x="559" y="846">3.00</text>
                <text class="dim red" x="736" y="846">3.33</text>
                <text class="dim red" x="973" y="846">3.33</text>
                <text class="dim red" x="1134" y="846">2.00</text>

                <!-- UCS icon -->
                <path class="ln" d="M0 889h24M31 870l17 17M48 870l-17 17"/>
            </g>
        </svg>
        <div class="viewcube">
            <svg width="96" height="150">
                <circle cx="72" cy="60" r="46" fill="none" stroke="#4b5059" stroke-width="10"/>
                <rect x="51" y="37" width="50" height="44" fill="#9b9ea2" stroke="#7f8388" stroke-width="2"/>
                <rect x="56" y="42" width="40" height="34" fill="#acaeb2"/>
                <circle cx="24" cy="60" r="11" fill="#212830"/>
                <rect x="62" y="1" width="20" height="21" fill="#212830"/><rect x="62" y="98" width="20" height="21" fill="#212830"/>
                <text class="compass" x="66" y="18">N</text>
                <text class="compass" x="17" y="66">O</text>
                <text class="compass" x="67" y="115">S</text>
                <text class="haut" x="58" y="64">HAUT</text>
            </svg>
            <button class="scg">SCG<i class="caret small"></i></button>
        </div>
    </main>

    <nav class="sheet-tabs">
        <a href="#" class="sheet active">et</a>
        <a href="#" class="sheet">Présentation1</a>
        <a href="#" class="sheet">Présentation2</a>
        <button class="sheet-add" aria-label="Nouvelle présentation"><i class="plus"></i></button>
    </nav>

    <footer class="status">
        <div class="cell coords">406983.1001, 192256.4571, 0.0000</div>
        <button class="cell zet">Z=<br>f(ET)</button>
        <button class="cell objet">OBJET</button>
        <div class="cell snap">
            <button aria-label="Grille"><svg class="st on"><path d="M4 2v20M8 1v22M12 1v22M16 1v22M20 2v20M1 5h22M1 10h22M1 15h22M1 20h22"/></svg></button>
            <button aria-label="Résolution"><svg class="st"><path d="M2 3h21M2 7h21M2 11h21M2 15h21M2 19h21" stroke-dasharray="2 2" stroke-width="2"/></svg></button>
            <button aria-label="Liste résolution"><i class="caret"></i></button>
        </div>
        <div class="cell mode">
            <button aria-label="Ortho"><svg class="st on"><path d="M4 3v17h18M4 13h6v7"/></svg></button>
            <button aria-label="Polaire"><svg class="st"><circle cx="11" cy="12" r="9"/><path d="M11 12h12M11 12l7-7v9"/></svg></button>
            <button aria-label="Liste polaire"><i class="caret"></i></button>
            <button aria-label="Isométrique"><svg class="st"><path d="M12 0v24M1 2l21 20"/></svg></button>
            <button aria-label="Liste isométrique"><i class="caret"></i></button>
        </div>
        <div class="cell track">
            <button aria-label="Repérage"><svg class="st on"><path d="M18 4L2 21h21M7 10l5 4"/></svg></button>
            <button aria-label="Accrochage"><svg class="st on"><path d="M5 5h17v16H4V9"/><circle cx="4" cy="5" r="3" fill="#00e000" stroke="#0a3a0a"/></svg></button>
            <button aria-label="Liste accrochage"><i class="caret"></i></button>
        </div>
        <div class="cell"><button aria-label="Epaisseur"><svg class="st on thick"><path d="M1 4h22M1 10h13M14 9h9M1 15h22M1 20h13M13 20h9"/></svg></button></div>
        <div class="cell notes">
            <button aria-label="Visibilité"><svg class="st on solid"><path d="M10 4l4 9 9 9-9-4h-3l-10 4 7-9z"/><circle cx="18" cy="5" r="4" fill="#4b4b4b" stroke-width="2"/></svg></button>
            <button aria-label="Echelle auto"><svg class="st on solid"><path d="M10 2l4 11 8 9-9-4h-2l-10 4 7-9zM20 1l-5 7h3l-2 6 7-8h-3z"/></svg></button>
            <button aria-label="Annotatif"><svg class="st solid"><path d="M12 1l3 12 8 9-9-4h-4l-9 4 8-9z"/></svg></button>
            <button class="scale">1:1<i class="caret"></i></button>
        </div>
        <button class="cell work"><svg class="st gear"><use href="#gear"/></svg>Dessin et annotation<i class="caret"></i></button>
        <button class="cell" aria-label="Moniteur"><svg class="st"><path d="M12 2v20M2 12h20" stroke-width="2.500"/></svg></button>
        <button class="cell" aria-label="Isoler objets"><svg class="st"><path d="M2 2h8v8H2zM14 21l-4-7-4 7z"/><circle cx="17" cy="11" r="4.500"/></svg></button>
        <button class="cell" aria-label="Performance"><svg class="st"><circle cx="12" cy="12" r="10.500"/><path d="M6 9l7 5" stroke-width="2.500"/></svg></button>
        <div class="cell refs">
            <button aria-label="Références"><svg class="st plain"><path d="M2 2h14l6 10v8H2z" fill="#e8e8e8"/><path d="M6 3h8l6 9H4z" fill="#3a68a8"/><path d="M2 13h9v8H2z" fill="#f2c12e"/><path d="M9 17l5 4 9-10" fill="none" stroke="#37b52a" stroke-width="3"/></svg></button>
            <button aria-label="Trame"><svg class="st plain"><path d="M0 4h24M0 20h24" stroke="#17d41a" stroke-width="2"/><circle cx="12" cy="12" r="10" fill="#0d0d0d"/><path d="M3 7h19M1 12h22M3 17h19M8 2h9M8 22h9" stroke="#fff" stroke-width="2.500" stroke-dasharray="2.500 2.500"/></svg></button>
        </div>
        <div class="cell last"></div>
    </footer>
    <div class="watermark" dir="rtl" lang="ar">خ5سات</div>

</body>
</html>
```
FILE: styles.css
```
* {
    box-sizing: border-box;
}

body {
    margin: 0;
    height: 100vh;
    display: flex;
    flex-direction: column;
    overflow: hidden;
    position: relative;
    background: #383838;
    color: #f4f4f4;
    font: 15px/20px "Open Sans", "Noto Sans", sans-serif;
}

button, select, input {
    font: inherit;
    color: inherit;
    background: none;
    border: 0;
    padding: 0;
    margin: 0;
    border-radius: 0;
}

button {
    display: flex;
    align-items: center;
    justify-content: center;
    flex: none;
}

select {
    appearance: none;
    min-width: 0;
}

a {
    color: inherit;
    text-decoration: none;
    white-space: nowrap;
}

svg {
    display: block;
    flex: none;
}

.defs {
    position: absolute;
    width: 0;
    height: 0;
}

.ic {
    width: 22px;
    height: 22px;
}

.caret {
    flex: none;
    width: 0;
    height: 0;
    border: 5px solid transparent;
    border-top: 6px solid #fff;
    border-bottom: 0;
}

.caret.small {
    border-width: 4px 4px 0;
}

.caret.dim {
    border-top-color: #c4c4c4;
}

/* title bar */
.titlebar {
    flex: none;
    display: flex;
    height: 32px;
    padding-top: 1px;
    border-bottom: 1px solid #303030;
    background: linear-gradient(#a2a2a2, #757575);
}

.quick {
    display: flex;
    align-items: center;
    padding: 0 2px 0 1px;
}

.qb {
    width: 32px;
    height: 28px;
}

.cb {
    width: 14px;
    height: 28px;
}

.sep {
    width: 1px;
    height: 29px;
    margin: 0 8px;
    background: #a5a5a5;
}

.workspace {
    display: flex;
    align-items: center;
    width: 239px;
    padding: 0 3px 0 5px;
    border: 1px solid #333;
    background: linear-gradient(#666, #4c4c4c);
}

.workspace select {
    flex: 1;
    padding-left: 2px;
}

.more {
    width: 23px;
    flex-direction: column;
    gap: 3px;
    border: 1px solid #666;
}

.more .bar {
    width: 11px;
    height: 2px;
    background: #fff;
}

.file-title {
    flex: 1;
    min-width: 200px;
    padding-right: 4px;
    overflow: hidden;
    background: #f4b96a;
    color: #1b1710;
    font-size: 19px;
    line-height: 31px;
    text-align: right;
    white-space: nowrap;
}

.play {
    width: 19px;
    border: 1px solid #666;
}

.play i {
    border: 5px solid transparent;
    border-left-color: #fff;
    border-right: 0;
}

.search {
    width: 240px;
    padding-left: 3px;
    border: 2px solid #444;
    background: #6d6d6d;
    font-size: 14px;
    font-style: italic;
}

.search::placeholder {
    color: #c6c6c6;
}

.account {
    display: flex;
    align-items: center;
    width: 337px;
    padding-right: 5px;
}

.account .qb {
    width: 31px;
}

.account .sep {
    margin: 0 5px 0 8px;
}

.signin {
    flex: 1;
    justify-content: flex-start;
    gap: 7px;
    padding-left: 5px;
}

.signin .caret {
    margin-left: 14px;
}

.window-buttons {
    display: flex;
    align-items: flex-start;
    width: 103px;
    padding: 1px 0 0 37px;
    gap: 18px;
    background: #f4b96a;
}

.window-buttons .close {
    width: 10px;
    height: 24px;
    margin-left: -5px;
    background: #d0602a;
}

/* menus */
.menubar {
    flex: none;
    height: 57px;
    border-bottom: 1px solid #2d2d2d;
    background: linear-gradient(#a8a8a8, #505050);
}

.menu-row {
    display: grid;
    grid-template-columns: 79px 81px 100px 94px 82px 73px 77px 94px 122px 127px 83px 39px 119px 110px 111px 121px 1fr auto;
    height: 28px;
    padding-left: 13px;
    align-items: center;
}

.menu-row.second {
    grid-template-columns: 124px 92px 72px 73px 1fr;
}

.dash {
    width: 4px;
    height: 3px;
    background: #111;
}

.ribbon-tabs {
    flex: none;
    display: grid;
    grid-template-columns: 26px 88px 84px 121px 54px 64px 67px 126px 61px 199px auto;
    justify-content: start;
    align-items: center;
    height: 27px;
    border-bottom: 1px solid #353535;
    background: #535353;
    color: #d4d4d4;
}

.current-tab {
    align-self: end;
    width: 11px;
    height: 23px;
    border: 1px solid #333;
    border-width: 1px 1px 0 0;
    background: #686868;
}

.minimize {
    gap: 6px;
}

/* ribbon */
.ribbon {
    flex: none;
    display: flex;
    height: 130px;
    border-bottom: 1px solid #8a8a8a;
    background: #3a3a3a;
}

.panel {
    flex: none;
    display: flex;
    flex-direction: column;
    border-right: 2px solid #3e3e3e;
    background: #5d5d5d;
}

.dessin { width: 255px; }
.modification { width: 177px; }
.annotation { width: 173px; }
.calques { width: 364px; }
.bloc { width: 106px; }
.proprietes { width: 318px; }
.vue { flex: 1; }

.body {
    flex: 1;
    display: flex;
    align-items: flex-start;
    padding-top: 5px;
}

.panel-title {
    position: relative;
    height: 24px;
    padding-bottom: 1px;
    gap: 8px;
    background: linear-gradient(#555, #484848);
}

.dessin .panel-title { padding-right: 56px; }
.modification .panel-title { padding-right: 4px; }
.annotation .panel-title { padding-right: 4px; }
.proprietes .panel-title { padding-right: 16px; }
.vue .panel-title { padding-right: 18px; }

.launcher {
    position: absolute;
    right: 4px;
    top: 8px;
}

.big {
    flex-direction: column;
    justify-content: flex-start;
    height: 96px;
    line-height: 20px;
    white-space: nowrap;
}

.big svg {
    width: 42px;
    height: 42px;
    margin: 2px 0 7px;
}

.big .caret {
    margin-top: 3px;
}

.letter {
    height: 51px;
    color: #dcdcdc;
    font: 52px/50px "Liberation Sans", sans-serif;
}

.dessin .big { width: 64px; }
.dessin .big:first-child { width: 66px; margin-right: 8px; }
.dessin .big:nth-child(3) { width: 62px; }
.annotation .big { width: 58px; }
.annotation .big:first-child { margin-left: 7px; }
.calques .big { width: 82px; }
.bloc .big { width: 54px; }
.proprietes .big { width: 107px; }
.vue .big { width: 78px; }

.tools {
    display: grid;
    grid-auto-rows: 32px;
}

.dessin .tools {
    margin-left: 2px;
}

.tool {
    width: 38px;
    height: 32px;
}

.tool.wide {
    width: 48px;
    justify-content: flex-start;
    gap: 9px;
}

.mod {
    grid-template-columns: 39px 46px 49px 38px;
}

.annotation .tools {
    margin-left: 2px;
}

.bloc .tools {
    margin-left: 4px;
}

.combo {
    display: flex;
    align-items: center;
    height: 29px;
    border: 2px solid #404040;
    background: linear-gradient(#6b6b6b, #505050);
}

.combo .caret {
    margin-right: 2px;
}

.combo select {
    flex: 1;
}

.layer-tools {
    width: 278px;
}

.layer-tools .combo {
    margin: 1px 0 2px;
    padding-left: 2px;
    gap: 3px;
}

.lay {
    grid-template-columns: repeat(5, 32px);
}

.lay .tool {
    width: 32px;
}

.swatch {
    width: 19px;
    height: 19px;
    margin: 0 4px;
    border: 1px solid #222;
    background: #fff;
}

.swatch.color {
    width: 22px;
    height: 20px;
    margin: 0 13px 0 15px;
    border-color: #999;
}

.prop-list {
    display: grid;
    grid-template-columns: 22px 183px;
    grid-auto-rows: 31px;
    column-gap: 3px;
    align-items: center;
}

.line {
    width: 80px;
    height: 2px;
    margin: 0 3px 0 8px;
    background: #f4f4f4;
}

.panel.collapsed {
    width: 81px;
    justify-content: flex-start;
    align-items: center;
    padding: 5px 0 6px;
    border-left: 1px solid #303030;
    background: linear-gradient(#707070, #4e4e4e);
}

.collapsed svg {
    width: 42px;
    height: 42px;
    margin-bottom: 6px;
}

.collapsed .ic {
    width: 22px;
    height: 22px;
    margin-bottom: 5px;
}

.collapsed .caret {
    margin-top: auto;
}

/* document tabs */
.doc-tabs {
    flex: none;
    display: flex;
    align-items: flex-start;
    height: 40px;
    padding-top: 5px;
    border-bottom: 4px solid #5a5a5a;
    background: #383838;
}

.doc {
    display: flex;
    align-items: center;
    justify-content: space-between;
    width: 162px;
    height: 31px;
    margin-right: 1px;
    padding: 0 14px 1px 12px;
    border: 1px solid #6c6c6c;
    border-width: 1px 1px 0 0;
    border-radius: 13px 15px 20px 14px;
    background: linear-gradient(#616161, #525252);
    color: #b8b8b8;
}

.doc.active {
    background: linear-gradient(#858585, #5c5c5c);
    color: #fff;
}

.doc.start {
    width: 134px;
    padding-left: 0;
    border-top-left-radius: 0;
    border-bottom-left-radius: 0;
    text-indent: -7px;
    overflow: hidden;
}

.doc.medium { width: 194px; }
.doc.long { width: 313px; }

.x {
    position: relative;
    width: 12px;
    height: 12px;
}

.x::before, .x::after {
    content: "";
    position: absolute;
    left: 5px;
    width: 2px;
    height: 12px;
    background: #383838;
    transform: rotate(45deg);
}

.x::after {
    transform: rotate(-45deg);
}

.plus {
    width: 12px;
    height: 12px;
    background: linear-gradient(#ccc, #ccc) center/12px 3px no-repeat, linear-gradient(#ccc, #ccc) center/3px 12px no-repeat;
}

.add {
    width: 30px;
    height: 20px;
    margin: 6px 0 0 9px;
    border: 1px solid #606060;
    border-radius: 4px 16px 2px 14px;
    background: #505050;
}

/* model space */
.canvas {
    flex: 1;
    position: relative;
    min-height: 0;
    background: #212830;
}

.drawing {
    width: 100%;
    height: 100%;
}

.ln {
    fill: none;
    stroke: #fff;
    stroke-width: 1.5;
}

.ln2 {
    fill: none;
    stroke: #fff;
    stroke-width: 2;
}

.ln3 {
    fill: none;
    stroke: #fff;
    stroke-width: 3;
}

.key {
    stroke: #fff;
    stroke-width: 2;
}

.cad {
    fill: #fff;
    font: 22px "Liberation Sans", sans-serif;
}

.dim {
    fill: #fff;
    font: bold 13px "Liberation Sans", sans-serif;
}

.dim.red {
    fill: #f00;
}

.view-label {
    fill: #e8e8e8;
    font-size: 15px;
}

.viewcube {
    position: absolute;
    top: 13px;
    right: 0;
}

.compass {
    fill: #a9abae;
    font: bold 17px "Open Sans", sans-serif;
}

.haut {
    fill: #4e535b;
    font: bold 11px "Open Sans", sans-serif;
}

.scg {
    position: absolute;
    right: -8px;
    top: 135px;
    width: 62px;
    height: 23px;
    gap: 6px;
    border: 1px solid #777;
    border-radius: 5px;
    background: #8d9095;
    color: #d0d0d0;
    font-size: 14px;
}

/* layout tabs */
.sheet-tabs {
    flex: none;
    display: flex;
    height: 27px;
    border-top: 1px solid #555;
}

.sheet {
    width: 122px;
    height: 23px;
    margin-left: 4px;
    border: 1px solid #6e6e6e;
    border-top: 0;
    border-radius: 2px 2px 12px 12px;
    background: linear-gradient(#4d4d4d, #646464);
    color: #b8b8b8;
    font-size: 14px;
    line-height: 22px;
    text-align: center;
}

.sheet.active {
    width: 25px;
    margin: 0;
    padding-right: 12px;
    background: #858585;
    color: #fff;
    font-weight: bold;
    direction: rtl;
    border-bottom-left-radius: 0;
}

.sheet-add {
    width: 31px;
    height: 22px;
    margin-left: 8px;
    border: 1px solid #5c5c5c;
    border-radius: 14px 2px 14px 4px;
    background: #4b4b4b;
}

/* status bar */
.status {
    flex: none;
    display: flex;
    gap: 1px;
    height: 37px;
    padding-bottom: 2px;
    padding-left: 452px;
}

.cell {
    flex: none;
    display: flex;
    align-items: center;
    justify-content: space-evenly;
    width: 35px;
    border: 2px solid #747474;
    background: #4b4b4b;
    white-space: nowrap;
}

.coords { width: 284px; padding-left: 14px; }
.zet { font-size: 14px; line-height: 15px; color: #ddd; }
.objet { width: 56px; }
.snap { width: 87px; }
.mode { width: 137px; }
.track { width: 85px; }
.notes { width: 142px; }
.work { width: 204px; }
.refs { width: 57px; }
.scale { gap: 5px; }
.last { flex: 1; min-width: 8px; }

.st {
    width: 24px;
    height: 24px;
    fill: none;
    stroke: #cfcfcf;
    stroke-width: 1.8;
}

.st.on {
    stroke: #2f8ff5;
    filter: drop-shadow(0 0 2px #1b4f9c);
}

.st.solid {
    fill: #cfcfcf;
    stroke-width: 1;
}

.st.on.solid {
    fill: #2f8ff5;
}

.st.thick {
    stroke-width: 3;
}

.st.plain {
    stroke: none;
}

.st.gear {
    width: 18px;
    height: 24px;
    color: #cfcfcf;
    stroke: none;
}

.watermark {
    position: absolute;
    left: 44%;
    bottom: 8px;
    color: rgba(160, 160, 160, 0.5);
    font: bold 56px/60px "DejaVu Sans", sans-serif;
}
```
